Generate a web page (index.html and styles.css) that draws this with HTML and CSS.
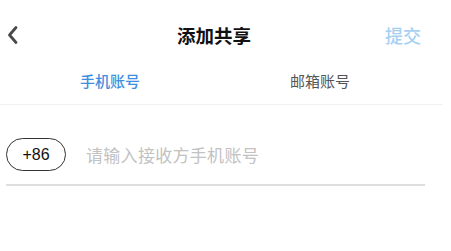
FILE: index.html
```html
<!DOCTYPE html>
<html lang="zh">
<head>
<meta charset="utf-8">
<link rel="stylesheet" href="styles.css">
</head>
<body>
<div class="page">
  <header class="nav">
    <div class="nav-left">
      <svg class="back" width="12" height="20" viewBox="0 0 12 20"><polyline points="9,2.5 2.5,10 9,17.5" fill="none" stroke="#4a4a4a" stroke-width="2.8" stroke-linecap="round" stroke-linejoin="round"/></svg>
    </div>
    <div class="nav-title">添加共享</div>
    <div class="nav-right">提交</div>
  </header>
  <div class="tabs-wrap">
    <div class="tabs">
      <div class="tab active">手机账号</div>
      <div class="tab">邮箱账号</div>
    </div>
  </div>
  <div class="form">
    <div class="phone-row">
      <div class="code">+86</div>
      <div class="placeholder">请输入接收方手机账号</div>
    </div>
  </div>
</div>
</body>
</html>
```
FILE: styles.css
```css
html, body {
  margin: 0;
  padding: 0;
  background: #fff;
}
body {
  font-family: "Noto Sans CJK SC", "Noto Sans", sans-serif;
}
.page {
  width: 443px;
}
.nav {
  display: grid;
  grid-template-columns: 1fr auto 1fr;
  align-items: center;
  height: 44px;
  margin-top: 13px;
  padding: 0 22px 0 7px;
}
.nav-left {
  display: flex;
  align-items: center;
}
.back {
  display: block;
}
.nav-title {
  font-size: 18.5px;
  font-weight: 700;
  color: #111;
  line-height: 20px;
}
.nav-right {
  justify-self: end;
  font-size: 18px;
  font-weight: 500;
  color: #a6d0f2;
  line-height: 20px;
}
.tabs-wrap {
  border-bottom: 1px solid #f1f1f1;
}
.tabs {
  display: flex;
  width: 420px;
  margin-left: 5px;
  height: 47px;
}
.tab {
  flex: 1;
  display: flex;
  align-items: center;
  justify-content: center;
  font-size: 15px;
  color: #555;
}
.tab.active {
  color: #3f8fe0;
  font-weight: 500;
}
.form {
  width: 419px;
  margin-left: 6px;
  padding-top: 33px;
}
.phone-row {
  display: flex;
  align-items: center;
  gap: 20px;
  padding-bottom: 13px;
  border-bottom: 2px solid #dedede;
}
.code {
  width: 58px;
  height: 31px;
  border: 1px solid #333;
  border-radius: 17px;
  display: flex;
  align-items: center;
  justify-content: center;
  font-family: "Liberation Sans", Arial, sans-serif;
  font-size: 16px;
  color: #111;
}
.placeholder {
  font-size: 17px;
  color: #c2c2c2;
  letter-spacing: 0.3px;
}
```
